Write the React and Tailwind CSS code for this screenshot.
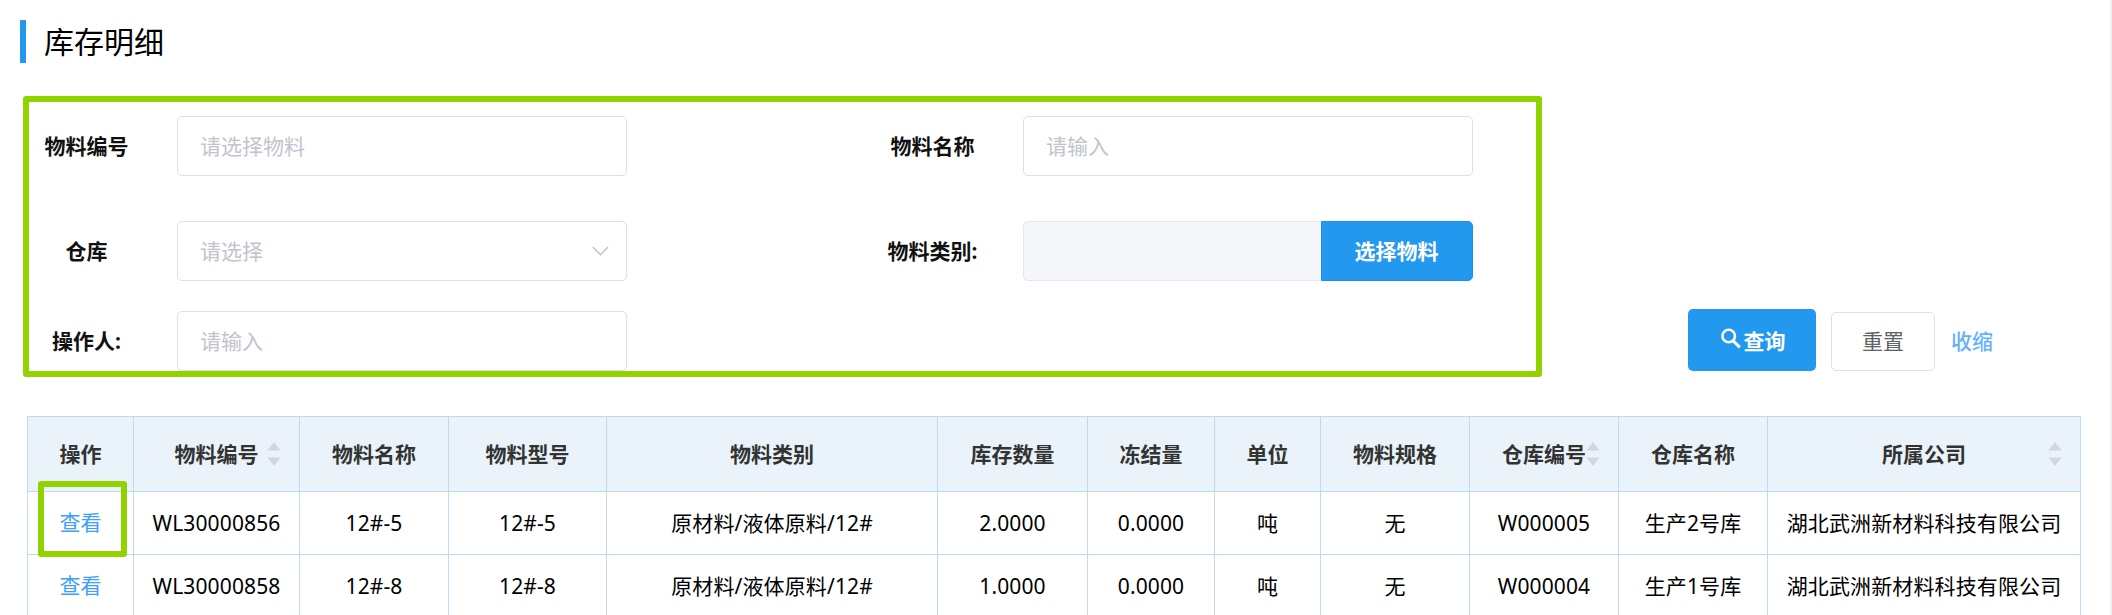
import React from 'react';

const columns = [
  { title: '操作' },
  { title: '物料编号', sortable: true },
  { title: '物料名称' },
  { title: '物料型号' },
  { title: '物料类别' },
  { title: '库存数量' },
  { title: '冻结量' },
  { title: '单位' },
  { title: '物料规格' },
  { title: '仓库编号', sortable: true },
  { title: '仓库名称' },
  { title: '所属公司', sortable: true },
];

const rows = [
  ['WL30000856', '12#-5', '12#-5', '原材料/液体原料/12#', '2.0000', '0.0000', '吨', '无', 'W000005', '生产2号库', '湖北武洲新材料科技有限公司'],
  ['WL30000858', '12#-8', '12#-8', '原材料/液体原料/12#', '1.0000', '0.0000', '吨', '无', 'W000004', '生产1号库', '湖北武洲新材料科技有限公司'],
];

const gridCols =
  'grid grid-cols-[106px_166px_149px_158px_331px_150px_127px_106px_149px_149px_149px_313px]';

function SortCaret() {
  return (
    <svg className="absolute right-[18px] top-[25px]" width="14" height="24" viewBox="0 0 14 24" fill="#d3d6de">
      <path d="M7 0 L13.6 8.6 H0.4 Z" />
      <path d="M7 24 L13.6 15.4 H0.4 Z" />
    </svg>
  );
}

function Label({ children }) {
  return <div className="w-[133px] text-center font-bold text-[#111]">{children}</div>;
}

function Input({ placeholder, children }) {
  return (
    <div className="ml-[24px] flex h-[60px] w-[450px] items-center justify-between rounded-[5px] border border-[#dcdfe6] bg-white pl-[22px] pr-[17px] text-[#c0c4cc]">
      <span>{placeholder}</span>
      {children}
    </div>
  );
}

export default function App() {
  return (
    <div className="relative flex h-[615px] w-[2112px] flex-col overflow-hidden border-r-2 border-[#f0f0f0] bg-white font-['Noto_Sans','Noto_Sans_CJK_SC',sans-serif] text-[21px] leading-[30px] text-black">
      <header className="ml-5 mt-5 flex h-[43px] shrink-0 items-center border-l-6 border-[#2398ef] pl-[18px] text-[30px]">
        库存明细
      </header>

      <section className="mt-[53px] flex h-[255px] shrink-0 pl-5">
        <div className="w-[846px]">
          <div className="mb-[45px] flex items-center">
            <Label>物料编号</Label>
            <Input placeholder="请选择物料" />
          </div>
          <div className="mb-[30px] flex items-center">
            <Label>仓库</Label>
            <Input placeholder="请选择">
              <svg width="17" height="10" viewBox="0 0 17 10" fill="none" stroke="#c0c4cc" strokeWidth="1.5">
                <path d="M1 1 L8.5 8.7 L16 1" />
              </svg>
            </Input>
          </div>
          <div className="flex items-center">
            <Label>操作人:</Label>
            <Input placeholder="请输入" />
          </div>
        </div>
        <div className="w-[822px]">
          <div className="mb-[45px] flex items-center">
            <Label>物料名称</Label>
            <Input placeholder="请输入" />
          </div>
          <div className="flex items-center">
            <Label>物料类别:</Label>
            <div className="ml-[24px] flex h-[60px] w-[450px]">
              <div className="w-[298px] rounded-l-[5px] border border-r-0 border-[#e4e7ed] bg-[#f5f7fa]" />
              <button className="w-[152px] rounded-r-[5px] border border-[#1e8cee] bg-[#2398ef] pb-px pr-px font-bold text-white">
                选择物料
              </button>
            </div>
          </div>
        </div>
        <div className="flex items-end">
          <button className="flex h-[62px] w-[128px] items-center justify-center gap-[3px] rounded-[5px] bg-[#2398ef] pl-[2px] pt-px font-bold text-white">
            <svg width="20" height="21" viewBox="0 0 20 21" fill="none" stroke="currentColor" strokeWidth="2.6" className="-mt-1">
              <circle cx="7.7" cy="8" r="6.3" />
              <path d="M12 12.6 L18.8 19.4" strokeWidth="3" />
            </svg>
            查询
          </button>
          <button className="ml-[15px] h-[59px] w-[104px] rounded-[5px] border border-[#dcdfe6] bg-white pb-[2px] text-[#606266]">
            重置
          </button>
          <a className="mb-[15px] ml-4 font-medium text-[#66b1ff]">收缩</a>
        </div>
      </section>

      <div className="ml-[27px] mt-[45px] w-[2054px] shrink-0 border-l border-t border-[#bddaf5]">
        <div className={gridCols}>
          {columns.map((col) => (
            <div
              key={col.title}
              className="relative flex h-[75px] items-center justify-center border-b border-r border-[#bddaf5] bg-[#e9f3f9] font-bold text-[#333]"
            >
              {col.title}
              {col.sortable && <SortCaret />}
            </div>
          ))}
        </div>
        {rows.map((row) => (
          <div key={row[0]} className={gridCols}>
            <div className="flex h-[63px] items-center justify-center border-b border-r border-[#bddaf5] pb-[2px] text-[#409eff]">
              查看
            </div>
            {row.map((cell, i) => (
              <div key={i} className="flex h-[63px] items-center justify-center whitespace-nowrap border-b border-r border-[#bddaf5] tracking-[0.12px]">
                {cell}
              </div>
            ))}
          </div>
        ))}
      </div>

      <div className="pointer-events-none absolute left-[23px] top-[96px] h-[281px] w-[1519px] rounded-[3px] border-6 border-[#91d300]" />
      <div className="pointer-events-none absolute left-[38px] top-[481px] h-[76px] w-[89px] rounded-[3px] border-6 border-[#91d300]" />
    </div>
  );
}
